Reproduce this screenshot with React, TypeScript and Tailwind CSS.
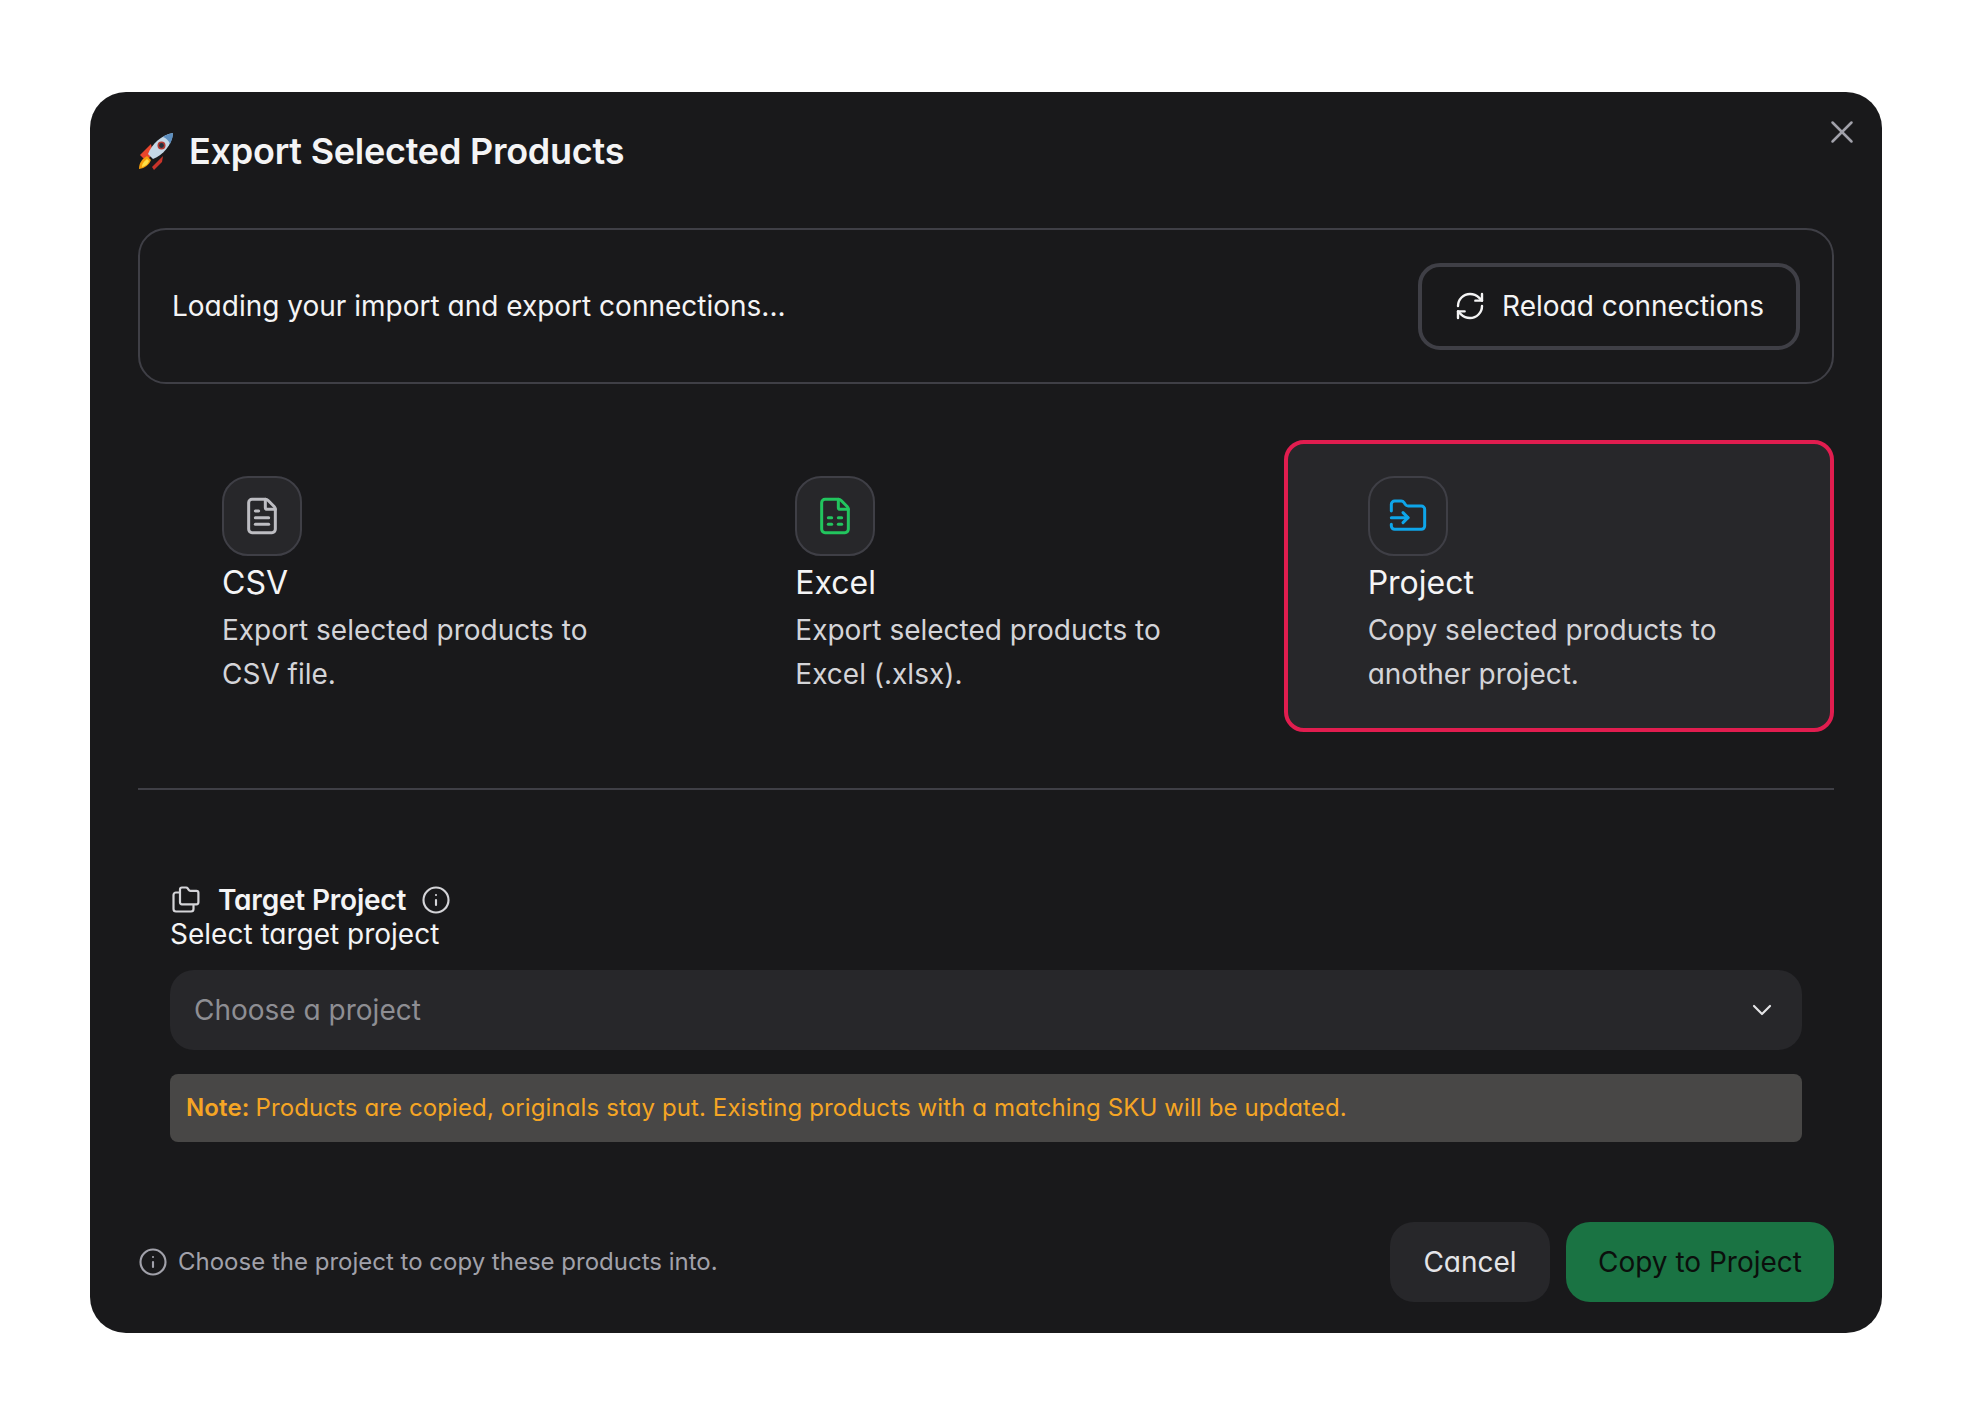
import { ChevronDown, FileSpreadsheet, FileText, FolderInput, Info, RefreshCw, X } from "lucide-react"

function Rocket() {
  return (
    <svg width="38" height="38" viewBox="0 0 38 38" className="-ml-px shrink-0">
      <path d="M3 23 L14 12 L16 22 L9 29 Z" fill="#e8452c" />
      <path d="M15 35 L26 24 L25 30 L17 38 Z" fill="#c9342a" />
      <path d="M2 37 C2 31 5 27 10 24 L14 28 C12 33 8 36 2 37 Z" fill="#f59e0b" />
      <path d="M5 35 C5 31 8 29 10 27 L12 29 C11 32 9 34 5 35 Z" fill="#fde047" />
      <path d="M11 22 C15 12 24 3 36 1 C35 13 26 23 16 27 Z" fill="#c4d7e6" />
      <path d="M36 1 C31 2 28 3 26 5 C29 6 32 9 33 12 C35 8 36 4 36 1 Z" fill="#5d8fc0" />
      <circle cx="24.5" cy="13.5" r="4" fill="#b33a33" />
      <circle cx="24.5" cy="13.5" r="2.4" fill="#23313f" />
    </svg>
  )
}

function FolderStack() {
  return (
    <svg width="30" height="30" viewBox="0 0 30 30" fill="none" stroke="#d4d4d8" strokeWidth="2.2" strokeLinecap="round" strokeLinejoin="round" className="ml-px shrink-0">
      <path d="M9 4.5 a2 2 0 0 1 2-2 h4 a2 2 0 0 1 1.7.9 l1 1.5 a2 2 0 0 0 1.7.9 h6 a2 2 0 0 1 2 2 v9.5 a2 2 0 0 1-2 2 H11 a2 2 0 0 1-2-2 Z" />
      <path d="M9 7.5 H5 a2.5 2.5 0 0 0-2.5 2.5 v14 a2.5 2.5 0 0 0 2.5 2.5 h15 a2.5 2.5 0 0 0 2.5-2.5 v-3.5" />
    </svg>
  )
}

function ExportOption({ icon, title, lines, active }: { icon: React.ReactNode; title: string; lines: string[]; active?: boolean }) {
  return (
    <div className={active ? "-ml-px h-[292px] rounded-[20px] border-4 border-[#e11d4f] bg-[#27272a] pt-8 pl-[80px]" : "h-[292px] rounded-[20px] border-4 border-transparent pt-8 pl-[80px]"}>
      <div className={active ? "flex h-20 w-20 items-center justify-center rounded-[26px] border-2 border-[#3f3f46]" : "flex h-20 w-20 items-center justify-center rounded-[26px] border-2 border-[#3f3f46] bg-[#27272a]"}>
        {icon}
      </div>
      <div className="mt-[2px] text-[32px] leading-[50px] text-[#f4f4f5]">{title}</div>
      {lines.map((l) => (
        <div key={l} className="text-[28px] leading-[44px] text-[#d4d4d8]">{l}</div>
      ))}
    </div>
  )
}

export default function App() {
  return (
    <div className="min-h-screen bg-white pt-[92px] pl-[90px] font-['Inter',sans-serif] [font-feature-settings:'cv11']">
      <div className="relative h-[1241px] w-[1792px] rounded-[36px] bg-[#19191b] px-12">
        <button className="absolute top-[21px] right-[21px] text-[#a1a1aa]">
          <X size={38} strokeWidth={1.6} />
        </button>

        <div className="flex h-[136px] items-center gap-[14px] pb-[19px]">
          <Rocket />
          <h2 className="text-[36px] font-semibold tracking-[-0.25px] text-[#f4f4f5]">Export Selected Products</h2>
        </div>

        <div className="flex h-[156px] items-center justify-between rounded-[28px] border-2 border-[#3f3f46] pr-8 pl-8">
          <span className="text-[28px] text-[#f4f4f5]">Loading your import and export connections...</span>
          <button className="flex h-[87px] w-[382px] items-center justify-center gap-4 rounded-[22px] border-4 border-[#3f3f46] text-[28px] text-[#f4f4f5]">
            <RefreshCw size={32} strokeWidth={1.8} />
            Reload connections
          </button>
        </div>

        <div className="mt-[56px] grid grid-cols-3 gap-6">
          <ExportOption icon={<FileText size={40} strokeWidth={1.8} className="text-[#bdbdc2]" />} title="CSV" lines={["Export selected products to", "CSV file."]} />
          <ExportOption icon={<FileSpreadsheet size={40} strokeWidth={1.8} className="text-[#22c55e]" />} title="Excel" lines={["Export selected products to", "Excel (.xlsx)."]} />
          <ExportOption active icon={<FolderInput size={40} strokeWidth={1.8} className="text-[#0ea5e9]" />} title="Project" lines={["Copy selected products to", "another project."]} />
        </div>

        <div className="mt-14 h-[2px] bg-[#3f3f46]" />

        <div className="mt-[93px] px-8">
          <div className="flex h-[34px] items-center">
            <FolderStack />
            <span className="ml-[17px] text-[28px] font-semibold tracking-[-0.2px] text-[#f4f4f5]">Target Project</span>
            <Info size={30} strokeWidth={1.7} className="ml-[15px] text-[#d4d4d8]" />
          </div>
          <div className="text-[28px] leading-[34px] text-[#f4f4f5]">Select target project</div>
          <div className="mt-[19px] flex h-20 items-center justify-between rounded-[24px] bg-[#27272a] pr-6 pl-6">
            <span className="text-[28px] text-[#8e8e93]">Choose a project</span>
            <ChevronDown size={32} strokeWidth={1.6} className="text-[#e4e4e7]" />
          </div>
          <div className="mt-6 flex h-[68px] items-center rounded-lg bg-[#484746] px-4 text-[24px] tracking-[0.11px] text-[#f5a524]">
            <span className="mr-[6px] font-semibold">Note:</span>
            Products are copied, originals stay put. Existing products with a matching SKU will be updated.
          </div>
        </div>

        <div className="mt-20 flex items-center">
          <Info size={30} strokeWidth={1.7} className="text-[#a1a1aa]" />
          <span className="ml-[10px] text-[24px] text-[#a1a1aa]">Choose the project to copy these products into.</span>
          <button className="ml-auto h-20 w-40 rounded-[24px] bg-[#27272a] text-[28px] text-[#e4e4e7]">Cancel</button>
          <button className="ml-4 h-20 w-[268px] rounded-[24px] bg-[#1a7343] text-[28px] text-[#0b0f0c]">Copy to Project</button>
        </div>
      </div>
    </div>
  )
}
